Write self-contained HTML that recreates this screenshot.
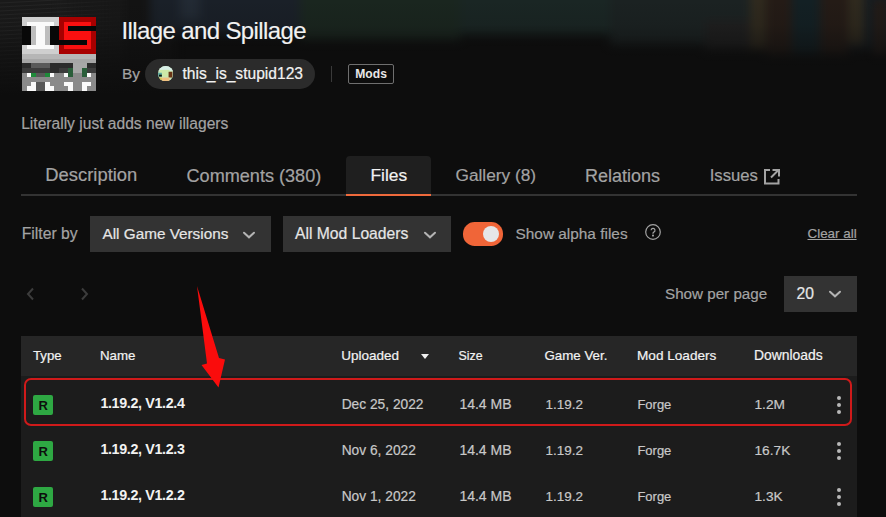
<!DOCTYPE html>
<html><head><meta charset="utf-8">
<style>
*{margin:0;padding:0;box-sizing:border-box}
html,body{width:886px;height:517px;overflow:hidden;background:#0d0d0d;font-family:"Liberation Sans",sans-serif;color:#f0f0f0}
.abs{position:absolute}
.t{position:absolute;white-space:nowrap;line-height:1}
</style></head><body>
<div id="hero" style="position:absolute;left:0;top:0;width:886px;height:130px;overflow:hidden;background:#0d0d0d">
<div style="position:absolute;left:-10px;top:-10px;width:906px;height:130px;filter:blur(5px)">
 <div style="position:absolute;left:0;top:0;width:75px;height:120px;background:#212121"></div>
 <div style="position:absolute;left:0;top:18px;width:60px;height:3px;background:#2a2a2a"></div>
 <div style="position:absolute;left:0;top:34px;width:55px;height:3px;background:#282828"></div>
 <div style="position:absolute;left:0;top:52px;width:50px;height:3px;background:#262626"></div>
 <div style="position:absolute;left:75px;top:0;width:60px;height:120px;background:#171717"></div>
 <div style="position:absolute;left:135px;top:0;width:50px;height:120px;background:#131313"></div>
 <div style="position:absolute;left:160px;top:0;width:150px;height:45px;background:#1a2028"></div>
 <div style="position:absolute;left:190px;top:0;width:20px;height:30px;background:#222a34"></div>
 <div style="position:absolute;left:310px;top:0;width:160px;height:50px;background:#1a261f"></div>
 <div style="position:absolute;left:470px;top:0;width:180px;height:45px;background:#1a2624"></div>
 <div style="position:absolute;left:620px;top:0;width:150px;height:55px;background:#1b2222"></div>
 <div style="position:absolute;left:715px;top:30px;width:60px;height:30px;background:#1f1f1f"></div>
 <div style="position:absolute;left:770px;top:0;width:136px;height:60px;background:#161c20"></div>
 <div style="position:absolute;left:760px;top:0;width:16px;height:60px;background:#302a1e"></div>
 <div style="position:absolute;left:776px;top:0;width:26px;height:65px;background:#241b16"></div>
 <div style="position:absolute;left:802px;top:0;width:28px;height:65px;background:#132024"></div>
 <div style="position:absolute;left:830px;top:0;width:28px;height:65px;background:#241b16"></div>
 <div style="position:absolute;left:858px;top:0;width:16px;height:55px;background:#302a1e"></div>
</div>
<div style="position:absolute;left:874px;top:0;width:12px;height:55px;background:#241b16;filter:blur(4px)"></div>
<div style="position:absolute;left:0;top:0;width:130px;height:110px;background:repeating-linear-gradient(177deg,#1a1a1a 0px,#1a1a1a 2px,#242424 3px,#1a1a1a 4px);-webkit-mask-image:linear-gradient(90deg,#000 0px,#000 50px,transparent 130px);filter:blur(0.6px)"></div>
<div style="position:absolute;left:0;top:0;width:886px;height:130px;background:linear-gradient(180deg,rgba(13,13,13,0) 0px,rgba(13,13,13,0.12) 25px,rgba(13,13,13,0.6) 55px,#0d0d0d 95px)"></div>
</div>
<svg class="abs" style="left:21.7px;top:16.7px" width="74" height="74" viewBox="0 0 16 16" shape-rendering="crispEdges"><rect x="0" y="0" width="8" height="1" fill="#cfcfcf"/><rect x="8" y="0" width="8" height="1" fill="#a80000"/><rect x="0" y="1" width="1" height="1" fill="#cfcfcf"/><rect x="1" y="1" width="6" height="1" fill="#fafafa"/><rect x="7" y="1" width="1" height="1" fill="#cfcfcf"/><rect x="8" y="1" width="1" height="1" fill="#a80000"/><rect x="9" y="1" width="6" height="1" fill="#fa1010"/><rect x="15" y="1" width="1" height="1" fill="#a80000"/><rect x="0" y="2" width="2" height="1" fill="#080808"/><rect x="2" y="2" width="1" height="1" fill="#bdbdbd"/><rect x="3" y="2" width="2" height="1" fill="#fafafa"/><rect x="5" y="2" width="1" height="1" fill="#bdbdbd"/><rect x="6" y="2" width="2" height="1" fill="#080808"/><rect x="8" y="2" width="1" height="1" fill="#a80000"/><rect x="9" y="2" width="1" height="1" fill="#fa1010"/><rect x="10" y="2" width="6" height="1" fill="#080808"/><rect x="0" y="3" width="2" height="1" fill="#080808"/><rect x="2" y="3" width="1" height="1" fill="#bdbdbd"/><rect x="3" y="3" width="2" height="1" fill="#fafafa"/><rect x="5" y="3" width="1" height="1" fill="#bdbdbd"/><rect x="6" y="3" width="2" height="1" fill="#080808"/><rect x="8" y="3" width="1" height="1" fill="#a80000"/><rect x="9" y="3" width="6" height="1" fill="#fa1010"/><rect x="15" y="3" width="1" height="1" fill="#a80000"/><rect x="0" y="4" width="2" height="1" fill="#080808"/><rect x="2" y="4" width="1" height="1" fill="#bdbdbd"/><rect x="3" y="4" width="2" height="1" fill="#fafafa"/><rect x="5" y="4" width="1" height="1" fill="#bdbdbd"/><rect x="6" y="4" width="2" height="1" fill="#080808"/><rect x="8" y="4" width="1" height="1" fill="#a80000"/><rect x="9" y="4" width="6" height="1" fill="#fa1010"/><rect x="15" y="4" width="1" height="1" fill="#a80000"/><rect x="0" y="5" width="2" height="1" fill="#080808"/><rect x="2" y="5" width="1" height="1" fill="#bdbdbd"/><rect x="3" y="5" width="2" height="1" fill="#fafafa"/><rect x="5" y="5" width="1" height="1" fill="#bdbdbd"/><rect x="6" y="5" width="8" height="1" fill="#080808"/><rect x="14" y="5" width="1" height="1" fill="#fa1010"/><rect x="15" y="5" width="1" height="1" fill="#a80000"/><rect x="0" y="6" width="1" height="1" fill="#cfcfcf"/><rect x="1" y="6" width="6" height="1" fill="#fafafa"/><rect x="7" y="6" width="1" height="1" fill="#cfcfcf"/><rect x="8" y="6" width="1" height="1" fill="#a80000"/><rect x="9" y="6" width="6" height="1" fill="#fa1010"/><rect x="15" y="6" width="1" height="1" fill="#a80000"/><rect x="0" y="7" width="8" height="1" fill="#cfcfcf"/><rect x="8" y="7" width="8" height="1" fill="#a80000"/><rect x="0" y="8" width="16" height="1" fill="#b6b6b6"/><rect x="0" y="9" width="16" height="1" fill="#a6a6a6"/><rect x="0" y="10" width="2" height="1" fill="#2c2c2c"/><rect x="2" y="10" width="4" height="1" fill="#5a5a5a"/><rect x="6" y="10" width="5" height="1" fill="#2c2c2c"/><rect x="11" y="10" width="3" height="1" fill="#a8a8a8"/><rect x="14" y="10" width="2" height="1" fill="#2c2c2c"/><rect x="0" y="11" width="6" height="1" fill="#3c3c3c"/><rect x="6" y="11" width="2" height="1" fill="#2c2c2c"/><rect x="8" y="11" width="2" height="1" fill="#3c3c3c"/><rect x="10" y="11" width="1" height="1" fill="#2a5e3a"/><rect x="11" y="11" width="2" height="1" fill="#a8a8a8"/><rect x="13" y="11" width="1" height="1" fill="#2a5e3a"/><rect x="14" y="11" width="2" height="1" fill="#3c3c3c"/><rect x="0" y="12" width="1" height="1" fill="#8a8a8a"/><rect x="1" y="12" width="1" height="1" fill="#fafafa"/><rect x="2" y="12" width="1" height="1" fill="#1f8a3a"/><rect x="3" y="12" width="2" height="1" fill="#585858"/><rect x="5" y="12" width="1" height="1" fill="#1f8a3a"/><rect x="6" y="12" width="1" height="1" fill="#fafafa"/><rect x="7" y="12" width="2" height="1" fill="#8a8a8a"/><rect x="9" y="12" width="1" height="1" fill="#fafafa"/><rect x="10" y="12" width="1" height="1" fill="#2a5e3a"/><rect x="11" y="12" width="2" height="1" fill="#8a8a8a"/><rect x="13" y="12" width="1" height="1" fill="#2a5e3a"/><rect x="14" y="12" width="1" height="1" fill="#fafafa"/><rect x="15" y="12" width="1" height="1" fill="#8a8a8a"/><rect x="0" y="13" width="16" height="1" fill="#8a8a8a"/><rect x="0" y="14" width="2" height="1" fill="#8a8a8a"/><rect x="2" y="14" width="1" height="1" fill="#fafafa"/><rect x="3" y="14" width="2" height="1" fill="#585858"/><rect x="5" y="14" width="1" height="1" fill="#fafafa"/><rect x="6" y="14" width="3" height="1" fill="#8a8a8a"/><rect x="9" y="14" width="2" height="1" fill="#fafafa"/><rect x="11" y="14" width="2" height="1" fill="#8a8a8a"/><rect x="13" y="14" width="2" height="1" fill="#fafafa"/><rect x="15" y="14" width="1" height="1" fill="#8a8a8a"/><rect x="0" y="15" width="1" height="1" fill="#8a8a8a"/><rect x="1" y="15" width="2" height="1" fill="#fafafa"/><rect x="3" y="15" width="2" height="1" fill="#585858"/><rect x="5" y="15" width="2" height="1" fill="#fafafa"/><rect x="7" y="15" width="3" height="1" fill="#8a8a8a"/><rect x="10" y="15" width="1" height="1" fill="#fafafa"/><rect x="11" y="15" width="2" height="1" fill="#8a8a8a"/><rect x="13" y="15" width="1" height="1" fill="#fafafa"/><rect x="14" y="15" width="2" height="1" fill="#8a8a8a"/></svg>
<div class="t" style="left:121.5px;top:18.98px;font-size:24px;color:#f2f2f2;-webkit-text-stroke:0.2px #f2f2f2;letter-spacing:-0.62px;-webkit-text-stroke:0.15px #f2f2f2;">Illage and Spillage</div>
<div class="t" style="left:122px;top:65.66px;font-size:15.4px;color:#a3a3a3;-webkit-text-stroke:0.2px #a3a3a3;">By</div>
<div class="abs" style="left:145px;top:59px;width:170px;height:30px;border-radius:15px;background:#2b2b2b"></div>
<svg class="abs" style="left:157.8px;top:65.8px" width="15.4" height="15.4" viewBox="0 0 16 16"><defs><clipPath id="av"><circle cx="8" cy="8" r="8"/></clipPath><filter id="avb"><feGaussianBlur stdDeviation="0.6"/></filter></defs><g clip-path="url(#av)"><rect width="16" height="16" fill="#c8e4b8"/><g filter="url(#avb)"><rect x="0" y="0" width="16" height="5" fill="#d8f0e8"/><rect x="2" y="4" width="10" height="7" fill="#cde8a8"/><rect x="0" y="7" width="4" height="4" fill="#5aa8a0"/><rect x="1" y="9" width="3" height="2" fill="#101810"/><rect x="11" y="6" width="4" height="6" fill="#6a3418"/><rect x="4" y="12" width="8" height="4" fill="#f0c080"/><rect x="1" y="12" width="3" height="3" fill="#d8c050"/></g></g></svg>
<div class="t" style="left:182.5px;top:65.69px;font-size:15.6px;color:#f2f2f2;-webkit-text-stroke:0.2px #f2f2f2;">this_is_stupid123</div>
<div class="abs" style="left:331px;top:66px;width:1px;height:16px;background:#3a3a3a"></div>
<div class="abs" style="left:348px;top:64px;width:46px;height:20px;border:1px solid #6f6f6f;border-radius:2px"></div>
<div class="t" style="left:355.3px;top:67.56px;font-size:12.1px;color:#e8e8e8;font-weight:bold;">Mods</div>
<div class="t" style="left:21.2px;top:115.79px;font-size:15.6px;color:#a3a3a3;-webkit-text-stroke:0.2px #a3a3a3;">Literally just adds new illagers</div>
<div class="abs" style="left:21px;top:194px;width:836px;height:2px;background:#333"></div>
<div class="abs" style="left:346px;top:156px;width:85px;height:38px;background:#1f1f1f;border-radius:4px 4px 0 0"></div>
<div class="abs" style="left:346px;top:193.6px;width:85px;height:2.7px;background:#ef6a3c"></div>
<div class="t" style="left:45.3px;top:166.42px;font-size:18.4px;color:#a3a3a3;-webkit-text-stroke:0.2px #a3a3a3;">Description</div>
<div class="t" style="left:186.5px;top:166.68px;font-size:18.1px;color:#a3a3a3;-webkit-text-stroke:0.2px #a3a3a3;">Comments (380)</div>
<div class="t" style="left:370.5px;top:167.27px;font-size:17.4px;color:#f2f2f2;-webkit-text-stroke:0.2px #f2f2f2;">Files</div>
<div class="t" style="left:455.5px;top:167.40px;font-size:17.25px;color:#a3a3a3;-webkit-text-stroke:0.2px #a3a3a3;">Gallery (8)</div>
<div class="t" style="left:585px;top:166.76px;font-size:18px;color:#a3a3a3;-webkit-text-stroke:0.2px #a3a3a3;">Relations</div>
<div class="t" style="left:709.7px;top:167.86px;font-size:16.7px;color:#a3a3a3;-webkit-text-stroke:0.2px #a3a3a3;">Issues</div>
<svg class="abs" style="left:763px;top:168px" width="17" height="17" viewBox="0 0 17 17" fill="none" stroke="#a3a3a3" stroke-width="2"><path d="M7 2H2v13.5h13.5V11"/><path d="M8 9.5L15 2.5M9.5 2H16V8.5"/></svg>
<div class="t" style="left:21.7px;top:225.67px;font-size:15.75px;color:#a3a3a3;-webkit-text-stroke:0.2px #a3a3a3;">Filter by</div>
<div class="abs" style="left:90px;top:216px;width:181px;height:36px;background:#333"></div>
<div class="t" style="left:102.5px;top:226.05px;font-size:15.3px;color:#e6e6e6;-webkit-text-stroke:0.2px #e6e6e6;">All Game Versions</div>
<div class="abs" style="left:283px;top:216px;width:168px;height:36px;background:#333"></div>
<div class="t" style="left:295px;top:225.71px;font-size:15.7px;color:#e6e6e6;-webkit-text-stroke:0.2px #e6e6e6;">All Mod Loaders</div>
<svg class="abs" style="left:242px;top:231px" width="14" height="8" viewBox="0 0 14 8" fill="none" stroke="#b4b4b4" stroke-width="2" stroke-linecap="round"><path d="M2 1.7L7 6.3L12 1.7"/></svg>
<svg class="abs" style="left:422.5px;top:231px" width="14" height="8" viewBox="0 0 14 8" fill="none" stroke="#b4b4b4" stroke-width="2" stroke-linecap="round"><path d="M2 1.7L7 6.3L12 1.7"/></svg>
<div class="abs" style="left:463px;top:222.4px;width:40px;height:23.2px;border-radius:11.6px;background:#f06538"></div>
<div class="abs" style="left:483px;top:225.8px;width:16px;height:16px;border-radius:50%;background:#e6e6e8"></div>
<div class="t" style="left:515.5px;top:225.96px;font-size:15.4px;color:#a3a3a3;-webkit-text-stroke:0.2px #a3a3a3;">Show alpha files</div>
<svg class="abs" style="left:644px;top:223px" width="18" height="18" viewBox="0 0 18 18" fill="none" stroke="#a3a3a3" stroke-width="1.2"><circle cx="9" cy="9" r="7.3"/><path d="M7.1 7.3a1.95 1.95 0 1 1 2.7 1.8c-.5.25-.8.6-.8 1.1v.6"/><circle cx="9" cy="12.6" r=".45" fill="#a3a3a3"/></svg>
<div class="t" style="left:807.5px;top:226.66px;font-size:13.4px;color:#a3a3a3;-webkit-text-stroke:0.2px #a3a3a3;text-decoration:underline;">Clear all</div>
<svg class="abs" style="left:26px;top:287px" width="9" height="14" viewBox="0 0 9 14" fill="none" stroke="#3c3c3c" stroke-width="2"><path d="M7 1.5L2 7l5 5.5"/></svg>
<svg class="abs" style="left:80px;top:287px" width="9" height="14" viewBox="0 0 9 14" fill="none" stroke="#3c3c3c" stroke-width="2"><path d="M2 1.5L7 7l-5 5.5"/></svg>
<div class="t" style="left:665px;top:286.03px;font-size:15.2px;color:#a3a3a3;-webkit-text-stroke:0.2px #a3a3a3;">Show per page</div>
<div class="abs" style="left:784px;top:276px;width:73px;height:36px;background:#333"></div>
<div class="t" style="left:796.5px;top:285.71px;font-size:15.7px;color:#e6e6e6;-webkit-text-stroke:0.2px #e6e6e6;">20</div>
<svg class="abs" style="left:828px;top:290px" width="14" height="8" viewBox="0 0 14 8" fill="none" stroke="#b4b4b4" stroke-width="2" stroke-linecap="round"><path d="M2 1.7L7 6.3L12 1.7"/></svg>
<div class="abs" style="left:21px;top:336px;width:836px;height:40px;background:#262626"></div>
<div class="abs" style="left:21px;top:376px;width:836px;height:141px;background:#1c1c1c"></div>
<div class="t" style="left:33px;top:349.13px;font-size:13.2px;color:#f2f2f2;-webkit-text-stroke:0.2px #f2f2f2;">Type</div>
<div class="t" style="left:100px;top:349.04px;font-size:13.3px;color:#f2f2f2;-webkit-text-stroke:0.2px #f2f2f2;">Name</div>
<div class="t" style="left:341.2px;top:348.87px;font-size:13.5px;color:#f2f2f2;-webkit-text-stroke:0.2px #f2f2f2;">Uploaded</div>
<svg class="abs" style="left:421px;top:354px" width="8" height="5" viewBox="0 0 8 5"><path d="M0 0h8L4 5z" fill="#f0f0f0"/></svg>
<div class="t" style="left:458.5px;top:349.80px;font-size:12.4px;color:#f2f2f2;-webkit-text-stroke:0.2px #f2f2f2;">Size</div>
<div class="t" style="left:544.5px;top:349.04px;font-size:13.3px;color:#f2f2f2;-webkit-text-stroke:0.2px #f2f2f2;">Game Ver.</div>
<div class="t" style="left:637px;top:348.79px;font-size:13.6px;color:#f2f2f2;-webkit-text-stroke:0.2px #f2f2f2;">Mod Loaders</div>
<div class="t" style="left:754px;top:348.53px;font-size:13.9px;color:#f2f2f2;-webkit-text-stroke:0.2px #f2f2f2;">Downloads</div>
<div class="abs" style="left:33px;top:395px;width:20px;height:20px;background:#2ea843;border-radius:2px"></div>
<div class="t" style="left:38.5px;top:399.20px;font-size:13px;color:#0d0d0d;font-weight:bold;">R</div>
<div class="t" style="left:100.4px;top:396.30px;font-size:14.3px;color:#f2f2f2;font-weight:bold;letter-spacing:-0.35px;">1.19.2, V1.2.4</div>
<div class="t" style="left:341.7px;top:397.56px;font-size:13.75px;color:#c8c8c8;-webkit-text-stroke:0.2px #c8c8c8;">Dec 25, 2022</div>
<div class="t" style="left:459.4px;top:397.35px;font-size:14.0px;color:#c8c8c8;-webkit-text-stroke:0.2px #c8c8c8;">14.4 MB</div>
<div class="t" style="left:545.5px;top:397.81px;font-size:13.45px;color:#c8c8c8;-webkit-text-stroke:0.2px #c8c8c8;">1.19.2</div>
<div class="t" style="left:637.4px;top:398.20px;font-size:13.0px;color:#c8c8c8;-webkit-text-stroke:0.2px #c8c8c8;">Forge</div>
<div class="t" style="left:754.5px;top:397.60px;font-size:13.7px;color:#c8c8c8;-webkit-text-stroke:0.2px #c8c8c8;">1.2M</div>
<div class="abs" style="left:837px;top:396.0px;width:4px;height:4px;border-radius:50%;background:#b8b8b8"></div>
<div class="abs" style="left:837px;top:403.0px;width:4px;height:4px;border-radius:50%;background:#b8b8b8"></div>
<div class="abs" style="left:837px;top:410.0px;width:4px;height:4px;border-radius:50%;background:#b8b8b8"></div>
<div class="abs" style="left:33px;top:441px;width:20px;height:20px;background:#2ea843;border-radius:2px"></div>
<div class="t" style="left:38.5px;top:445.20px;font-size:13px;color:#0d0d0d;font-weight:bold;">R</div>
<div class="t" style="left:100.4px;top:442.30px;font-size:14.3px;color:#f2f2f2;font-weight:bold;letter-spacing:-0.35px;">1.19.2, V1.2.3</div>
<div class="t" style="left:341.7px;top:443.56px;font-size:13.75px;color:#c8c8c8;-webkit-text-stroke:0.2px #c8c8c8;">Nov 6, 2022</div>
<div class="t" style="left:459.4px;top:443.35px;font-size:14.0px;color:#c8c8c8;-webkit-text-stroke:0.2px #c8c8c8;">14.4 MB</div>
<div class="t" style="left:545.5px;top:443.81px;font-size:13.45px;color:#c8c8c8;-webkit-text-stroke:0.2px #c8c8c8;">1.19.2</div>
<div class="t" style="left:637.4px;top:444.20px;font-size:13.0px;color:#c8c8c8;-webkit-text-stroke:0.2px #c8c8c8;">Forge</div>
<div class="t" style="left:754.5px;top:443.60px;font-size:13.7px;color:#c8c8c8;-webkit-text-stroke:0.2px #c8c8c8;">16.7K</div>
<div class="abs" style="left:837px;top:442.0px;width:4px;height:4px;border-radius:50%;background:#b8b8b8"></div>
<div class="abs" style="left:837px;top:449.0px;width:4px;height:4px;border-radius:50%;background:#b8b8b8"></div>
<div class="abs" style="left:837px;top:456.0px;width:4px;height:4px;border-radius:50%;background:#b8b8b8"></div>
<div class="abs" style="left:33px;top:487px;width:20px;height:20px;background:#2ea843;border-radius:2px"></div>
<div class="t" style="left:38.5px;top:491.20px;font-size:13px;color:#0d0d0d;font-weight:bold;">R</div>
<div class="t" style="left:100.4px;top:488.30px;font-size:14.3px;color:#f2f2f2;font-weight:bold;letter-spacing:-0.35px;">1.19.2, V1.2.2</div>
<div class="t" style="left:341.7px;top:489.56px;font-size:13.75px;color:#c8c8c8;-webkit-text-stroke:0.2px #c8c8c8;">Nov 1, 2022</div>
<div class="t" style="left:459.4px;top:489.35px;font-size:14.0px;color:#c8c8c8;-webkit-text-stroke:0.2px #c8c8c8;">14.4 MB</div>
<div class="t" style="left:545.5px;top:489.81px;font-size:13.45px;color:#c8c8c8;-webkit-text-stroke:0.2px #c8c8c8;">1.19.2</div>
<div class="t" style="left:637.4px;top:490.20px;font-size:13.0px;color:#c8c8c8;-webkit-text-stroke:0.2px #c8c8c8;">Forge</div>
<div class="t" style="left:754.5px;top:489.60px;font-size:13.7px;color:#c8c8c8;-webkit-text-stroke:0.2px #c8c8c8;">1.3K</div>
<div class="abs" style="left:837px;top:488.0px;width:4px;height:4px;border-radius:50%;background:#b8b8b8"></div>
<div class="abs" style="left:837px;top:495.0px;width:4px;height:4px;border-radius:50%;background:#b8b8b8"></div>
<div class="abs" style="left:837px;top:502.0px;width:4px;height:4px;border-radius:50%;background:#b8b8b8"></div>
<div class="abs" style="left:23.8px;top:377.5px;width:828px;height:48px;border:2.7px solid #cf1a1a;border-radius:7px"></div>
<svg class="abs" style="left:0;top:0" width="886" height="517" viewBox="0 0 886 517"><path d="M197 286L219 358L225 359.5L218.5 387.5L201.5 365L207 363.5Z" fill="#fa0c0c"/></svg>
</body></html>
